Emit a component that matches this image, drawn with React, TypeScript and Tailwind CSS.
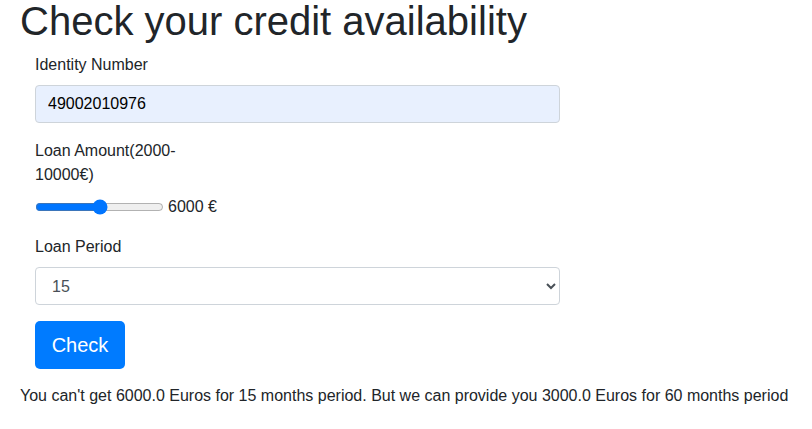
import { useState } from 'react';

export default function App() {
  const [identity, setIdentity] = useState('49002010976');
  const [amount, setAmount] = useState(6000);
  const [period, setPeriod] = useState('15');

  return (
    <div className="min-h-screen bg-white px-5 text-base leading-6 text-[#212529] font-['Liberation_Sans',Arial,sans-serif]">
      <h1 className="mb-[11px] text-[40px] font-medium leading-[42px]">Check your credit availability</h1>

      <form className="px-[15px]" onSubmit={(e) => e.preventDefault()}>
        <div className="mb-4">
          <label className="mb-2 block">Identity Number</label>
          <input
            type="text"
            value={identity}
            onChange={(e) => setIdentity(e.target.value)}
            className="block h-[38px] w-[525px] rounded-[4px] border border-[#ced4da] bg-[#e8f0fe] px-3 text-black outline-none"
          />
        </div>

        <div className="mb-4 w-[160px]">
          <label className="mb-2 block">Loan Amount(2000-10000€)</label>
          <div className="flex w-[200px] items-center">
            <input
              type="range"
              min={2000}
              max={10000}
              step={500}
              value={amount}
              onChange={(e) => setAmount(Number(e.target.value))}
              className="m-0 h-4 w-[129px]"
            />
            <span className="ml-1 leading-6">{amount} €</span>
          </div>
        </div>

        <div className="mb-4">
          <label className="mb-2 block">Loan Period</label>
          <select
            value={period}
            onChange={(e) => setPeriod(e.target.value)}
            className="block h-[38px] w-[525px] rounded-[4px] border border-[#ced4da] bg-white px-3 text-[#495057] outline-none"
          >
            {['12', '15', '18', '24', '36', '48', '60'].map((m) => (
              <option key={m} value={m}>{m}</option>
            ))}
          </select>
        </div>

        <button
          type="submit"
          className="h-12 w-[90px] rounded-[5px] bg-[#007bff] text-xl leading-[30px] text-white"
        >
          Check
        </button>
      </form>

      <p className="mt-[15px]">
        You can't get 6000.0 Euros for 15 months period. But we can provide you 3000.0 Euros for 60 months period
      </p>
    </div>
  );
}
